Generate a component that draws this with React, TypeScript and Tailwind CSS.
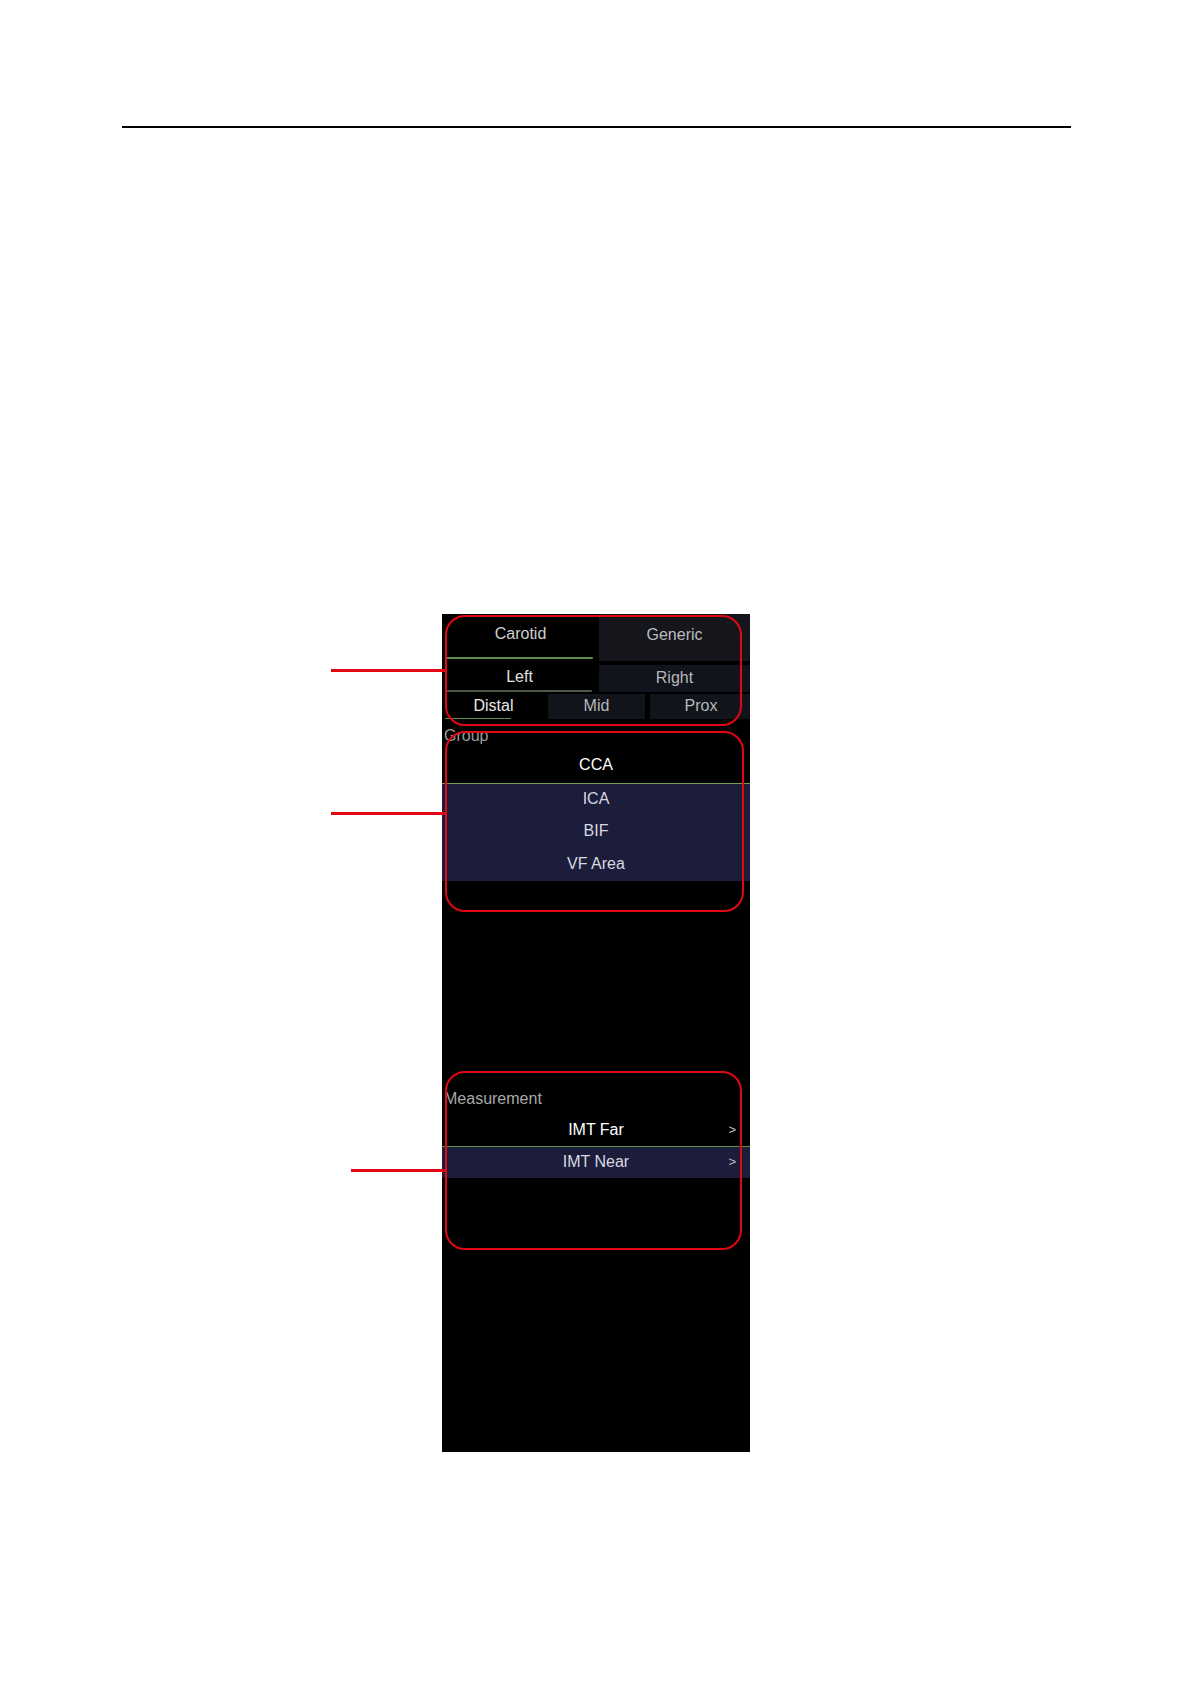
import React from "react";

const font = { fontFamily: '"Liberation Sans", Arial, sans-serif' };

// red annotation line pointing at a group on the screen
const Callout: React.FC<{ className: string }> = ({ className }) => (
  <div className={`absolute h-[3px] bg-[#e30613] ${className}`} />
);

const RedBox: React.FC<{ className: string }> = ({ className }) => (
  <div
    className={`pointer-events-none absolute rounded-[20px] border-2 border-[#e30613] ${className}`}
  />
);

const Tab: React.FC<{
  label: string;
  bar: string;
  className?: string;
  textClass?: string;
}> = ({ label, bar, className, textClass }) => (
  <div className={`flex flex-col ${className ?? ""}`}>
    <div className={`flex flex-1 items-center justify-center ${textClass ?? ""}`}>
      {label}
    </div>
    <div className={`h-[2px] rounded-r-full ${bar}`} />
  </div>
);

const ListRow: React.FC<{ label: string; className?: string; arrow?: boolean }> = ({
  label,
  className,
  arrow,
}) => (
  <div className={`grid grid-cols-[1fr_auto_1fr] items-center ${className ?? ""}`}>
    <span />
    <span>{label}</span>
    <span className="flex justify-end pr-[14px] text-[13px] text-[#c0c0c8]">
      {arrow ? ">" : ""}
    </span>
  </div>
);

export default function App() {
  return (
    <div className="relative h-[1684px] w-[1191px] overflow-hidden bg-white" style={font}>
      <div className="pt-[126px] pl-[122px]">
        <div className="h-[1.5px] w-[949px] bg-black" />
      </div>

      <div className="relative ml-[442px] mt-[486px] flex h-[838px] w-[308px] flex-col bg-black text-[16px] text-[#d4d4d4]">
        {/* top tabs */}
        <div className="flex h-[47px]">
          <Tab
            label="Carotid"
            bar="ml-[3px] w-[148px] bg-[#5f8f4e]"
            className="w-[157px] pb-[2px]"
            textClass="pb-[2px] text-[#d0d0d0]"
          />
          <div className="flex flex-1 items-center justify-center bg-[#14161b] pb-[4px] text-[#bdbdbd]">
            Generic
          </div>
        </div>

        <div className="mt-[4px] flex h-[27px] gap-[2px]">
          <Tab
            label="Left"
            bar="ml-[4px] w-[146px] bg-[#4b5a46]"
            className="w-[155px]"
            textClass="text-[#e0e0e0]"
          />
          <div className="flex flex-1 items-center justify-center bg-[#12141d] text-[#b8b8b8]">
            Right
          </div>
        </div>

        <div className="mt-[2px] flex h-[25px]">
          <Tab
            label="Distal"
            bar="ml-[3px] w-[66px] bg-[#5f8f4e]"
            className="w-[103px]"
            textClass="text-[#e8e8e8]"
          />
          <div className="ml-[3px] flex w-[97px] items-center justify-center bg-[#12141b] text-[#b8b8b8]">
            Mid
          </div>
          <div className="ml-[5px] flex flex-1 items-center justify-center bg-[#12141b] pl-[2px] text-[#b8b8b8]">
            Prox
          </div>
        </div>

        {/* group */}
        <div className="mt-[4px] h-[25px] pl-[2px] leading-[25px] text-[#9c9c9c]">Group</div>
        <div className="flex h-[35px] items-center justify-center text-white">CCA</div>
        <div className="h-[1px] bg-[#6f9f55]" />
        <div className="flex flex-col bg-[#1b1d3a] text-[#d8d8e0]">
          <div className="flex h-[31px] items-center justify-center">ICA</div>
          <div className="flex h-[33px] items-center justify-center">BIF</div>
          <div className="flex h-[33px] items-center justify-center">VF Area</div>
        </div>

        {/* measurement */}
        <div className="mt-[203px] h-[30px] pl-[2px] leading-[30px] text-[#a8a8a8]">
          Measurement
        </div>
        <ListRow label="IMT Far" arrow className="h-[32px] text-white" />
        <div className="h-[1px] bg-[#5f8a48]" />
        <ListRow label="IMT Near" arrow className="h-[31px] bg-[#1b1d3a] text-[#d8d8e0]" />

        {/* annotations over the screen */}
        <RedBox className="left-[3px] top-[1px] h-[111px] w-[297px]" />
        <RedBox className="left-[3px] top-[117px] h-[181px] w-[299px]" />
        <RedBox className="left-[3px] top-[457px] h-[179px] w-[297px]" />

        <Callout className="left-[-111px] top-[55px] w-[114px]" />
        <Callout className="left-[-111px] top-[198px] w-[114px]" />
        <Callout className="left-[-91px] top-[555px] w-[94px]" />
      </div>
    </div>
  );
}
